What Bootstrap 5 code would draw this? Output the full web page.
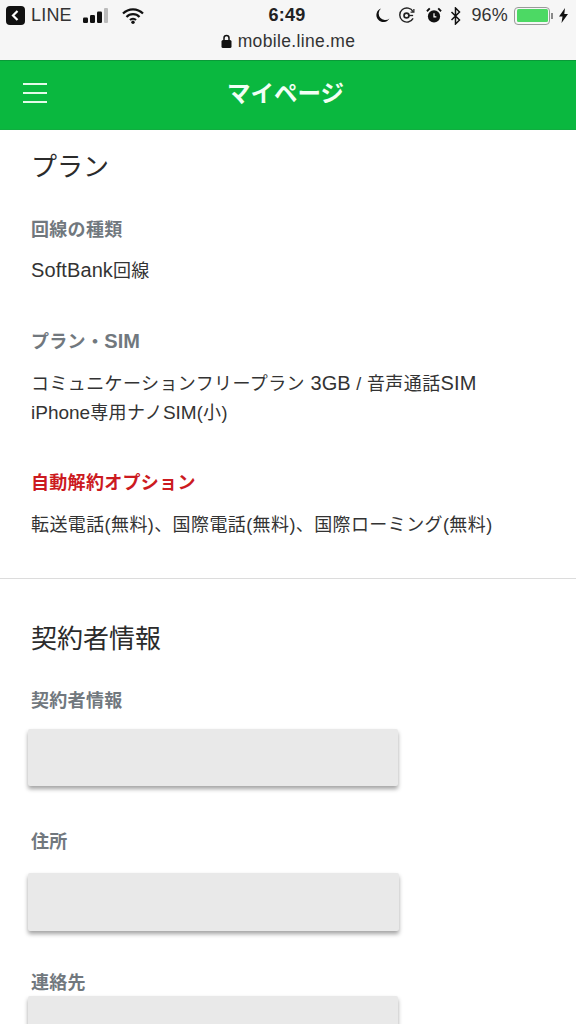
<!DOCTYPE html>
<html lang="ja">
<head>
<meta charset="utf-8">
<title>マイページ</title>
<link href="https://cdn.jsdelivr.net/npm/bootstrap@5.3.0/dist/css/bootstrap.min.css" rel="stylesheet">
<style>
html,body{height:1024px;overflow:hidden;}
body{font-family:"Liberation Sans","Noto Sans CJK JP",sans-serif;background:#fff;color:#2e2e2e;}
.statusarea{height:60px;background:#f6f6f6;color:#1d1d1d;}
.statusrow{height:31px;padding:0 8px 0 6px;}
.urlrow{font-size:17.5px;line-height:20px;color:#333;gap:6px;letter-spacing:.35px;}
.stat-left,.stat-right{flex:1 1 0;}
.clock{font-weight:700;font-size:18px;letter-spacing:.3px;color:#222;}
.carrier{color:#333;font-size:18px;letter-spacing:.2px;}
.linename{margin-left:6px;}
.sig{margin-left:11px;}
.wifi{margin-left:13px;}
.ic-gap{margin-left:8px;}
.ic-gap2{margin-left:11px;}
.pct{margin-left:9px;}
.batt{width:36px;height:18px;border:1.5px solid #9a9a9a;border-radius:4px;padding:1.5px;margin-left:6px;}
.batt i{display:block;height:100%;background:#4cd964;border-radius:1.5px;}
.battnub{width:2px;height:6px;background:#8a8a8a;margin-left:1px;}
.bolt{margin-left:6px;}
.greenbar{height:70px;background:#0ab83f;border-top:1px solid #0a9a38;border-bottom:1px solid #0fae3f;color:#fff;position:relative;}
.burger{position:absolute;left:23px;top:22px;width:24px;}
.burger span{display:block;height:2px;background:#e4fbe9;margin-bottom:7px;}
.bartitle{font-size:23.5px;font-weight:700;color:#f2fff5;margin-right:5px;}
.sectitle{font-size:26px;font-weight:400;line-height:32px;color:#2b2b2b;margin:0;}
.fieldlabel{font-size:18px;font-weight:700;line-height:24px;color:#71787e;margin:0;letter-spacing:.3px;}
.fieldtext{font-size:18px;line-height:29px;color:#333;margin:0;letter-spacing:.4px;}
.lat{font-size:20px;letter-spacing:.1px;line-height:1;}
.lat-sm{font-size:19px;letter-spacing:0;line-height:1;}
.redlabel{color:#cc1a1f;}
.sect1{padding:21px 30px 0 31px;height:448px;}
.rule{margin:0;border:0;border-top:1px solid #dcdcdc;opacity:1;}
.sect2{padding:44px 30px 0 31px;}
.masked{background:#e9e9e9;box-shadow:0 3px 4px rgba(0,0,0,.36);border-radius:2px;margin-left:-3px;}
.m1{width:370px;height:57px;margin-top:16px;}
.m2{width:371px;height:58px;margin-top:19px;}
.m3{width:370px;height:40px;margin-top:1px;}
.lab-a{margin-top:35px;}
.lab-b{margin-top:44px;}
.lab-c{margin-top:43px;}
.lab-d{margin-top:34px;}
.lab-e{margin-top:44px;}
.lab-f{margin-top:40px;}
.txt-a{margin-top:15px;}
.txt-b{margin-top:16px;}
</style>
</head>
<body>
<div class="statusarea">
  <div class="statusrow d-flex align-items-center">
    <div class="stat-left d-flex align-items-center">
      <svg width="19" height="19" viewBox="0 0 19 19"><rect width="19" height="19" rx="4" fill="#111"/><path d="M11.5 5L7 9.5l4.500 4.500" fill="none" stroke="#fff" stroke-width="2.200"/></svg>
      <span class="carrier linename">LINE</span>
      <svg class="sig" width="26" height="15" viewBox="0 0 26 15"><rect x="0" y="9.500" width="5" height="5.500" rx="1.200" fill="#111"/><rect x="7" y="7" width="5" height="8" rx="1.200" fill="#111"/><rect x="14" y="3.500" width="5" height="11.500" rx="1.200" fill="#111"/><rect x="21" y="0" width="4" height="15" rx="1" fill="#bbb"/></svg>
      <svg class="wifi" width="22" height="16" viewBox="0 0 22 16"><path d="M1 5.500a14 14 0 0 1 20 0M4.500 9a9 9 0 0 1 13 0M8 12a4.300 4.300 0 0 1 6 0" fill="none" stroke="#111" stroke-width="2.200"/><circle cx="11" cy="14.300" r="1.700" fill="#111"/></svg>
    </div>
    <div class="clock">6:49</div>
    <div class="stat-right d-flex align-items-center justify-content-end">
      <svg width="15" height="15" viewBox="0 0 15 15"><path d="M6 .5a7 7 0 1 0 8.500 10A6.500 6.500 0 0 1 6 .5z" fill="#111"/></svg>
      <svg class="ic-gap" width="17" height="17" viewBox="0 0 18 18"><path d="M16 12a7.500 7.500 0 1 1 0-7" fill="none" stroke="#222" stroke-width="1.500"/><path d="M16.800 2v3.500h-3.500" fill="none" stroke="#222" stroke-width="1.300"/><circle cx="9" cy="9" r="2.600" fill="none" stroke="#222" stroke-width="1.800"/><path d="M11.500 9h4.500" fill="none" stroke="#222" stroke-width="1.400"/></svg>
      <svg class="ic-gap2" width="16" height="17" viewBox="0 0 17 17"><circle cx="8.500" cy="9.500" r="6.500" fill="#111"/><path d="M8.500 6v4h2.500" fill="none" stroke="#fff" stroke-width="1.300"/><path d="M1 4l3-3M16 4l-3-3" stroke="#111" stroke-width="2"/></svg>
      <svg class="ms-2" width="12" height="18" viewBox="0 0 11 18"><path d="M1 5l8 8-4 4V1l4 4-8 8" fill="none" stroke="#111" stroke-width="1.500"/></svg>
      <span class="carrier pct">96%</span>
      <div class="batt"><i></i></div><div class="battnub"></div>
      <svg class="bolt" width="9" height="15" viewBox="0 0 9 15"><path d="M6 0L0 8.500h3.500L2.500 15 9 6H5.300z" fill="#111"/></svg>
    </div>
  </div>
  <div class="urlrow d-flex align-items-center justify-content-center">
    <svg width="11" height="14" viewBox="0 0 11 14"><path d="M3 6V4a2.500 2.500 0 0 1 5 0v2" fill="none" stroke="#111" stroke-width="1.500"/><rect x=".5" y="6" width="10" height="8" rx="1.500" fill="#111"/></svg>
    <span>mobile.line.me</span>
  </div>
</div>
<header class="greenbar d-flex align-items-center justify-content-center">
  <div class="burger"><span></span><span></span><span></span></div>
  <div class="bartitle">マイページ</div>
</header>
<section class="sect1">
  <h2 class="sectitle">プラン</h2>
  <p class="fieldlabel lab-a">回線の種類</p>
  <p class="fieldtext txt-a"><span class="lat">SoftBank</span>回線</p>
  <p class="fieldlabel lab-b">プラン・<span class="lat">SIM</span></p>
  <p class="fieldtext txt-b">コミュニケーションフリープラン <span class="lat">3GB</span> / 音声通話<span class="lat">SIM</span><br><span class="lat-sm">iPhone</span>専用ナノ<span class="lat-sm">SIM</span>(小)</p>
  <p class="fieldlabel redlabel lab-c">自動解約オプション</p>
  <p class="fieldtext txt-b">転送電話(無料)、国際電話(無料)、国際ローミング(無料)</p>
</section>
<hr class="rule">
<section class="sect2">
  <h2 class="sectitle">契約者情報</h2>
  <p class="fieldlabel lab-d">契約者情報</p>
  <div class="masked m1"></div>
  <p class="fieldlabel lab-e">住所</p>
  <div class="masked m2"></div>
  <p class="fieldlabel lab-f">連絡先</p>
  <div class="masked m3"></div>
</section>
<script src="https://cdn.jsdelivr.net/npm/bootstrap@5.3.0/dist/js/bootstrap.bundle.min.js"></script>
</body>
</html>
